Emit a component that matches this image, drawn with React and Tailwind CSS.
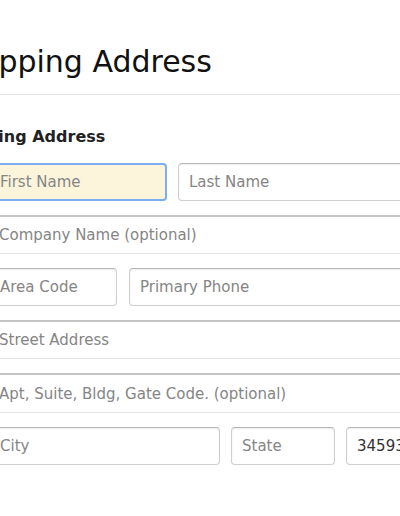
import React from "react";

const base =
  "h-[38px] min-w-0 shrink-0 rounded-[4px] border border-[#cfcfcf] border-t-[#b5b5b5] bg-white px-[10px] text-[15px] text-[#333] placeholder:text-[#858585] shadow-[inset_0_1px_2px_rgba(0,0,0,0.08)] outline-none";

const wide =
  "h-[39px] w-full border-t-2 border-b border-t-[#c4c4c4] border-b-[#e4e4e4] bg-white px-[10px] text-[15px] text-[#333] placeholder:text-[#858585] outline-none";

const App = () => {
  return (
    <div
      className="w-[400px] h-[516px] overflow-hidden bg-white"
      style={{ fontFamily: '"DejaVu Sans", "Open Sans", sans-serif' }}
    >
      <div className="ml-[-48px] w-[500px]">
        <h1 className="pt-[42px] text-[30px] leading-[40px] text-[#111]">Shipping Address</h1>
      </div>
      <div className="mt-[12px] h-px w-full bg-[#e2e2e2]" />
      <div className="ml-[-53px] w-[500px]">
        <h2 className="mt-[32px] text-[16px] font-bold leading-[20px] text-[#222]">Shipping Address</h2>
      </div>

      {/* form fields */}
      <div className="ml-[-11px] mt-[16px] flex w-[470px] flex-col gap-[14px]">
        <div className="flex gap-[11px]">
          <input
            className="h-[38px] w-[178px] min-w-0 shrink-0 rounded-[4px] border-2 border-[#7eaef0] bg-[#fcf5dc] px-[9px] text-[15px] text-[#333] placeholder:text-[#858585] outline-none"
            placeholder="First Name"
          />
          <input className={`${base} flex-1 shrink`} placeholder="Last Name" />
        </div>
        <input className={wide} placeholder="Company Name (optional)" />
        <div className="flex gap-[12px]">
          <input className={`${base} w-[128px]`} placeholder="Area Code" />
          <input className={`${base} flex-1 shrink`} placeholder="Primary Phone" />
        </div>
        <input className={wide} placeholder="Street Address" />
        <input className={`${wide} h-[40px]`} placeholder="Apt, Suite, Bldg, Gate Code. (optional)" />
        <div className="flex gap-[11px]">
          <input className={`${base} w-[231px]`} placeholder="City" />
          <input className={`${base} w-[104px]`} placeholder="State" />
          <input className={`${base} flex-1 shrink`} defaultValue="34593" />
        </div>
      </div>
    </div>
  );
};

export default App;
